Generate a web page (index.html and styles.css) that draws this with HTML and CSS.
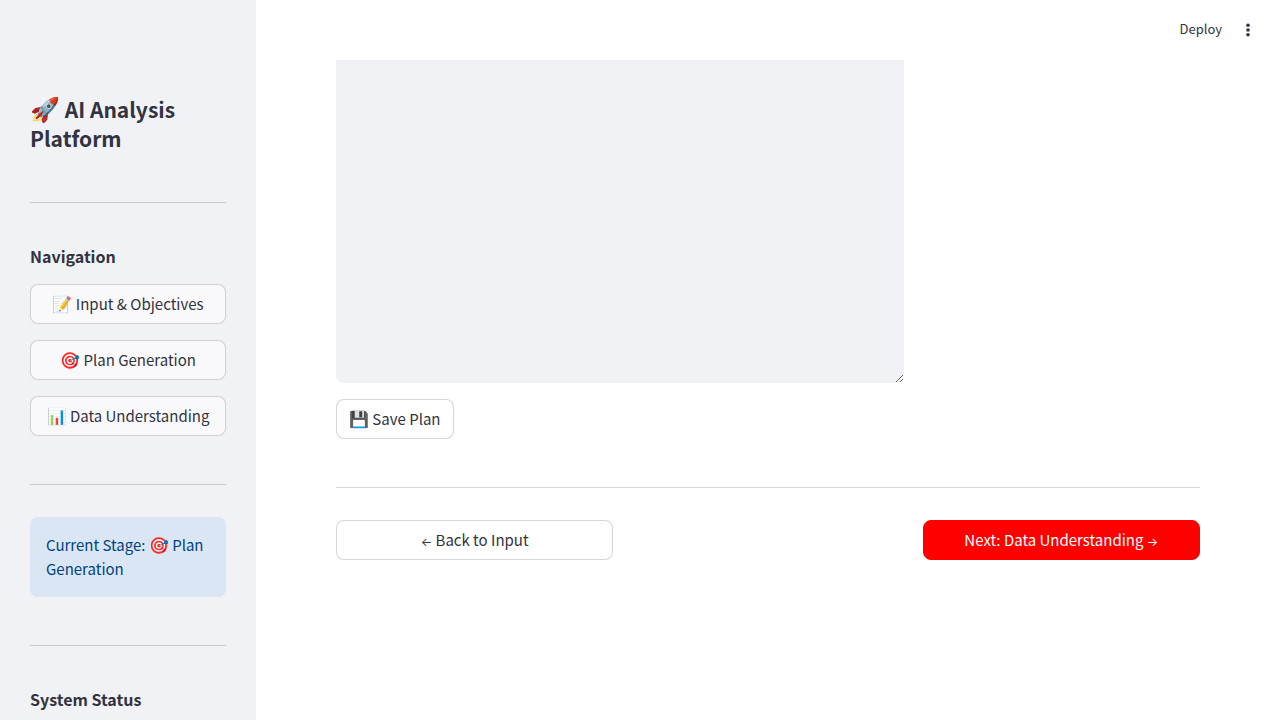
FILE: index.html
```html
<!DOCTYPE html>
<html lang="en">
<head>
<meta charset="utf-8">
<meta name="viewport" content="width=device-width, initial-scale=1">
<title>AI Analysis Platform</title>
<link rel="stylesheet" href="styles.css">
</head>
<body>
<div class="app">
  <aside class="sidebar">
    <h1 class="title"><span class="title-emoji">🚀</span> AI Analysis Platform</h1>
    <hr class="divider">
    <h2 class="section-title">Navigation</h2>
    <nav class="nav">
      <button class="btn" type="button"><span class="emoji">📝</span> Input &amp; Objectives</button>
      <button class="btn" type="button"><span class="emoji">🎯</span> Plan Generation</button>
      <button class="btn" type="button"><span class="emoji">📊</span> Data Understanding</button>
    </nav>
    <hr class="divider">
    <p class="stage">Current Stage: <span class="emoji">🎯</span> Plan Generation</p>
    <hr class="divider">
    <h2 class="section-title">System Status</h2>
  </aside>
  <div class="page">
    <header class="toolbar">
      <button class="deploy" type="button">Deploy</button>
      <button class="menu" type="button" aria-label="Main menu">
        <svg width="20" height="20" viewBox="0 0 20 20" fill="currentColor" aria-hidden="true"><circle cx="10" cy="5.2" r="1.8"/><circle cx="10" cy="10" r="1.8"/><circle cx="10" cy="14.8" r="1.8"/></svg>
      </button>
    </header>
    <main class="content">
      <textarea class="plan" aria-label="Plan"></textarea>
      <button class="btn save" type="button"><span class="emoji">💾</span> Save Plan</button>
      <hr class="divider">
      <div class="steps">
        <button class="btn" type="button"><span class="arrow">←</span> Back to Input</button>
        <button class="btn primary" type="button">Next: Data Understanding <span class="arrow">→</span></button>
      </div>
    </main>
  </div>
</div>
</body>
</html>
```

FILE: styles.css
```css
* {
  box-sizing: border-box;
}

body {
  margin: 0;
  background: #ffffff;
  color: #31333f;
  font-family: "Noto Sans CJK SC", "Noto Sans", sans-serif;
  font-size: 15px;
  line-height: 24px;
}

button {
  font: inherit;
  color: inherit;
}

.app {
  display: flex;
  height: 100vh;
  overflow: hidden;
}

.sidebar {
  flex: 0 0 256px;
  padding: 95px 30px 0;
  overflow: hidden;
  background: #f0f2f6;
}

.title {
  margin: 0;
  padding-bottom: 1px;
  font-size: 21px;
  font-weight: 600;
  line-height: 29px;
}

.title-emoji {
  font-size: 24px;
  line-height: 1;
}

.divider {
  margin: 48px 0 32px;
  border: 0;
  border-top: 1px solid #31333f33;
}

.section-title {
  margin: 0;
  padding: 10px 0 17px;
  font-size: 16px;
  font-weight: 600;
  line-height: 22px;
}

.nav {
  display: flex;
  flex-direction: column;
  gap: 16px;
}

.btn {
  min-height: 40px;
  padding: 0 12px;
  border: 1px solid #31333f33;
  border-radius: 8px;
  background: #ffffff;
  line-height: 24px;
  white-space: nowrap;
}

.nav .btn {
  background: #f9f9fb;
}

.emoji {
  font-size: 16px;
  line-height: 1;
}

.stage {
  margin: 0;
  padding: 16px;
  border-radius: 8px;
  background: #dae6f4;
  color: #004280;
}

.page {
  display: flex;
  flex: 1;
  flex-direction: column;
  min-width: 0;
}

.toolbar {
  display: flex;
  flex: 0 0 60px;
  align-items: center;
  justify-content: flex-end;
  gap: 16px;
  padding: 0 22px;
}

.deploy,
.menu {
  padding: 0;
  border: 0;
  background: none;
}

.deploy {
  padding-bottom: 2px;
  font-size: 13px;
}

.menu {
  display: flex;
}

.content {
  padding: 0 80px;
}

.plan {
  display: block;
  width: calc(200% / 3 - 8px);
  height: 323px;
  padding: 16px;
  border: 0;
  border-radius: 0 0 8px 8px;
  background: #f0f2f6;
  color: inherit;
  font: inherit;
  resize: vertical;
}

.save {
  margin-top: 16px;
}

.steps {
  display: grid;
  grid-template-columns: repeat(3, 1fr);
  gap: 16px;
}

.primary {
  grid-column: 3;
  border-color: #ff0000;
  background: #ff0000;
  color: #ffffff;
}

.arrow {
  font-family: Inter, sans-serif;
  font-size: 12px;
  line-height: 1;
}
```
